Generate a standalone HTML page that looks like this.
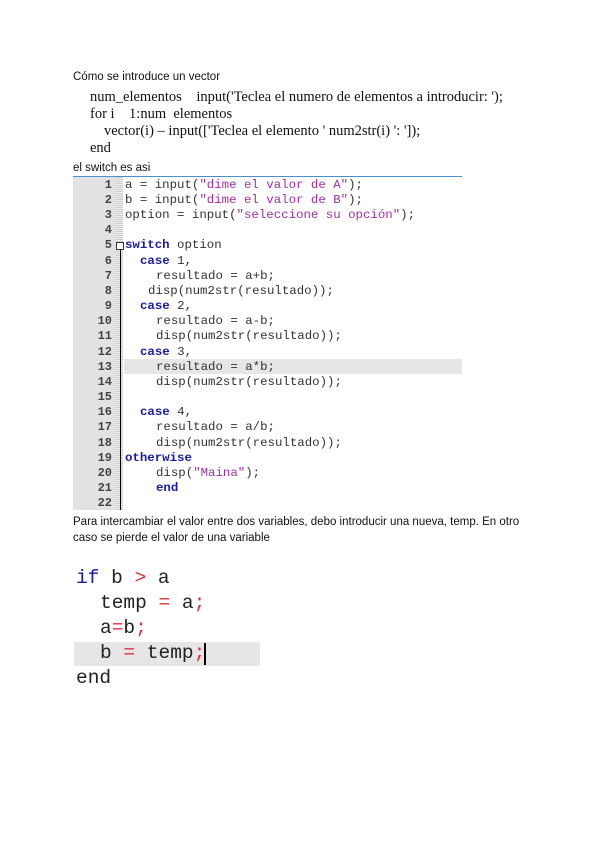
<!DOCTYPE html>
<html><head><meta charset="utf-8"><style>
body{margin:0;width:600px;height:848px;background:#fff;position:relative;overflow:hidden;font-family:"Liberation Sans",sans-serif}
.a{position:absolute;white-space:pre}
.s{font-size:11.5px;color:#111}
.t{font-family:"Liberation Serif",serif;font-size:14.5px;color:#111}
.c{font-family:"Liberation Mono",monospace;font-size:12.4px;color:#333}
.n{font-family:"Liberation Mono",monospace;font-size:12px;color:#444;font-weight:bold;text-align:right;width:40px;left:72px}
.k{color:#1a1aa8}.q{color:#a030a0}.nb{color:#3a3aa0}
.b{font-family:"Liberation Mono",monospace;font-size:19.5px;color:#222}
.r{color:#e03040}
</style></head><body>
<div class="a s" style="left:73px;top:71px">Cómo se introduce un vector</div>
<div class="a t" style="left:90px;top:89px">num_elementos    input('Teclea el numero de elementos a introducir: ');</div>
<div class="a t" style="left:90px;top:106px">for i    1:num  elementos</div>
<div class="a t" style="left:104px;top:123px">vector(i) – input(['Teclea el elemento ' num2str(i) ': ']);</div>
<div class="a t" style="left:90px;top:140px">end</div>
<div class="a s" style="left:73px;top:162px">el switch es asi</div>
<div style="position:absolute;left:73px;top:176px;width:389px;height:1px;background:#4a90d0"></div>
<div style="position:absolute;left:73px;top:177px;width:43px;height:333px;background:#e2e2e2"></div>
<div style="position:absolute;left:116px;top:177px;width:7px;height:333px;background:repeating-linear-gradient(0deg,#ccc 0 1px,#eee 1px 2px)"></div>
<div style="position:absolute;left:120px;top:248px;width:1px;height:262px;background:#000"></div>
<div style="position:absolute;left:116px;top:242px;width:8px;height:8px;border:1px solid #333;background:#fff;box-sizing:border-box"></div>
<div style="position:absolute;left:124px;top:359px;width:338px;height:15px;background:#e6e6e6"></div>
<div id="code"></div>
<div class="a s" style="left:73px;top:516px">Para intercambiar el valor entre dos variables, debo introducir una nueva, temp. En otro</div>
<div class="a s" style="left:73px;top:532px">caso se pierde el valor de una variable</div>
<div style="position:absolute;left:74px;top:642px;width:186px;height:24px;background:#e6e6e6"></div>
<div style="position:absolute;left:204px;top:643px;width:2px;height:22px;background:#000"></div>
<div class="a b" style="left:76px;top:567px"><span class="k">if</span> b <span class="r">&gt;</span> a</div>
<div class="a b" style="left:100px;top:592px">temp <span class="r">=</span> a<span class="r">;</span></div>
<div class="a b" style="left:100px;top:617px">a<span class="r">=</span>b<span class="r">;</span></div>
<div class="a b" style="left:100px;top:642px">b <span class="r">=</span> temp<span class="r">;</span></div>
<div class="a b k" style="left:76px;top:667px">end</div>
<script></script>
<div class="a n" style="top:178px">1</div><div class="a c" style="left:125px;top:178px">a = input(<span class="q">"dime el valor de A"</span>);</div>
<div class="a n" style="top:193px">2</div><div class="a c" style="left:125px;top:193px">b = input(<span class="q">"dime el valor de B"</span>);</div>
<div class="a n" style="top:208px">3</div><div class="a c" style="left:125px;top:208px">option = input(<span class="q">"seleccione su opción"</span>);</div>
<div class="a n" style="top:223px">4</div>
<div class="a n" style="top:238px">5</div><div class="a c" style="left:125px;top:238px"><b class="k">switch</b> option</div>
<div class="a n" style="top:254px">6</div><div class="a c" style="left:140px;top:254px"><b class="k">case</b> 1,</div>
<div class="a n" style="top:269px">7</div><div class="a c" style="left:156px;top:269px">resultado = a+b;</div>
<div class="a n" style="top:284px">8</div><div class="a c" style="left:148px;top:284px">disp(num2str(resultado));</div>
<div class="a n" style="top:299px">9</div><div class="a c" style="left:140px;top:299px"><b class="k">case</b> 2,</div>
<div class="a n" style="top:314px">10</div><div class="a c" style="left:156px;top:314px">resultado = a-b;</div>
<div class="a n" style="top:329px">11</div><div class="a c" style="left:156px;top:329px">disp(num2str(resultado));</div>
<div class="a n" style="top:345px">12</div><div class="a c" style="left:140px;top:345px"><b class="k">case</b> 3,</div>
<div class="a n" style="top:360px">13</div><div class="a c" style="left:156px;top:360px">resultado = a*b;</div>
<div class="a n" style="top:375px">14</div><div class="a c" style="left:156px;top:375px">disp(num2str(resultado));</div>
<div class="a n" style="top:390px">15</div>
<div class="a n" style="top:405px">16</div><div class="a c" style="left:140px;top:405px"><b class="k">case</b> 4,</div>
<div class="a n" style="top:420px">17</div><div class="a c" style="left:156px;top:420px">resultado = a/b;</div>
<div class="a n" style="top:436px">18</div><div class="a c" style="left:156px;top:436px">disp(num2str(resultado));</div>
<div class="a n" style="top:451px">19</div><div class="a c" style="left:125px;top:451px"><b class="k">otherwise</b></div>
<div class="a n" style="top:466px">20</div><div class="a c" style="left:156px;top:466px">disp(<span class="q">"Maina"</span>);</div>
<div class="a n" style="top:481px">21</div><div class="a c" style="left:156px;top:481px"><b class="k">end</b></div>
<div class="a n" style="top:496px">22</div>
</body></html>
